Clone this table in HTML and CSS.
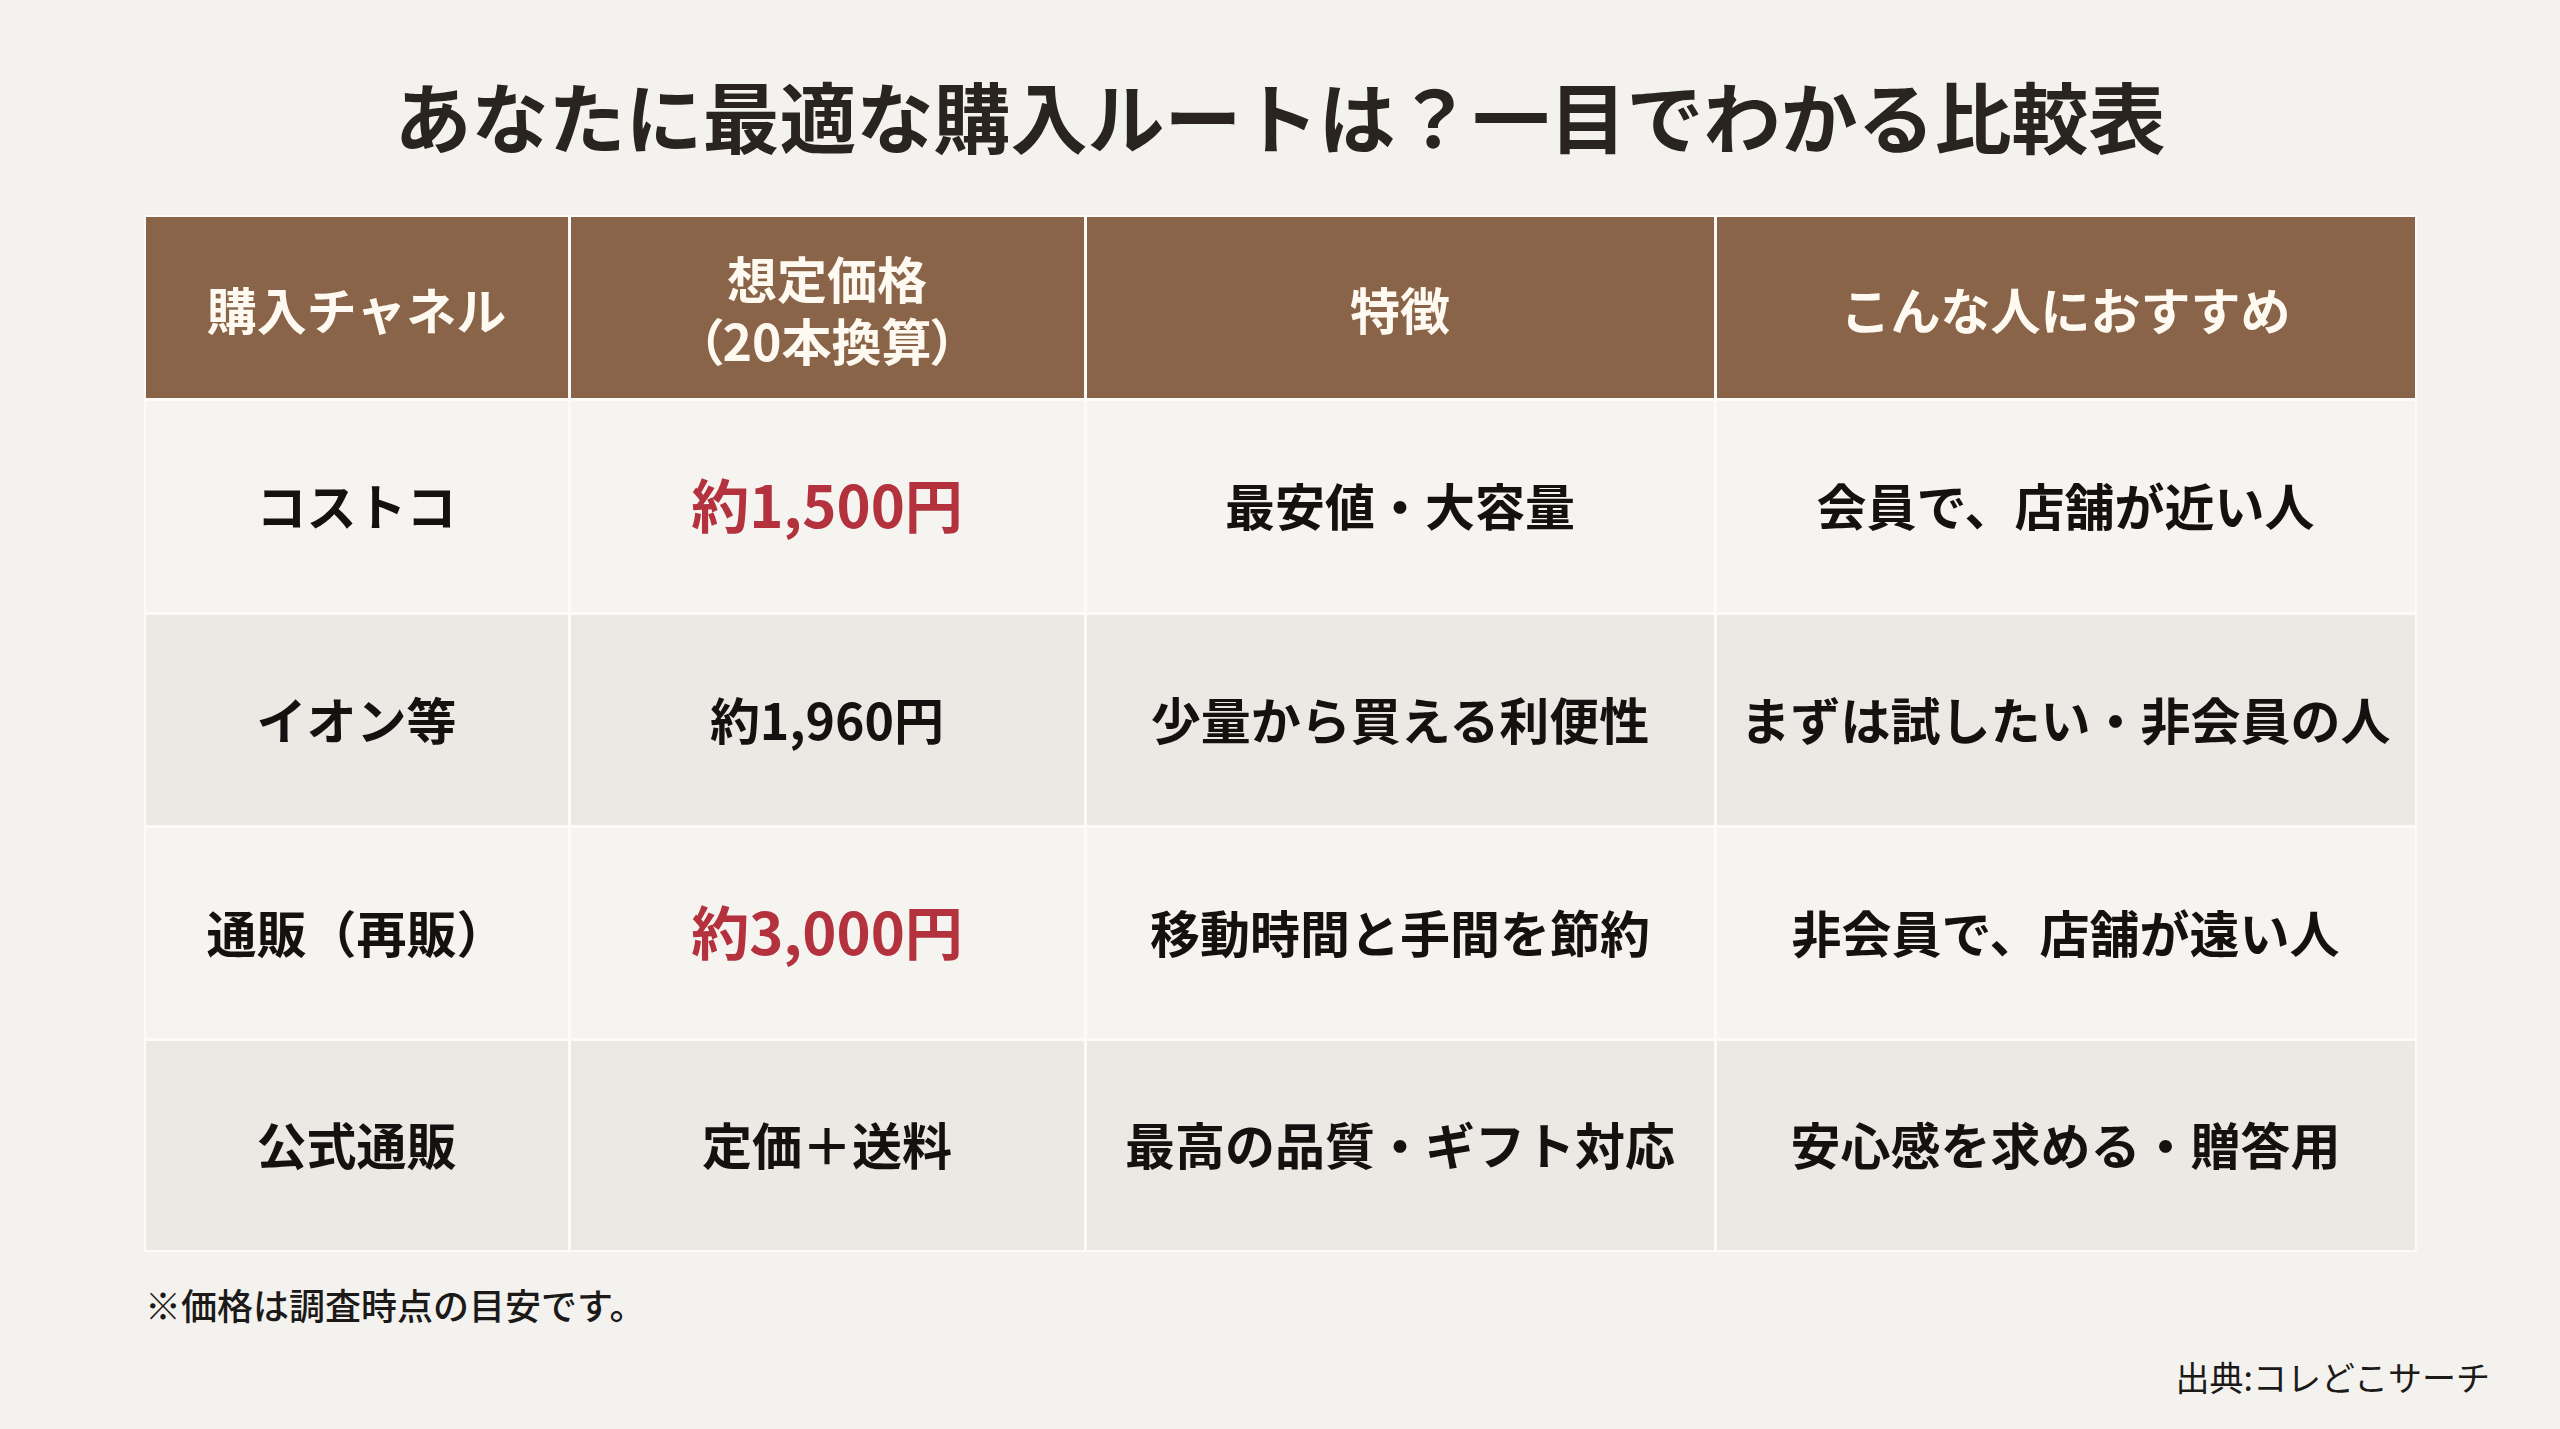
FILE: index.html
```html
<!DOCTYPE html>
<html lang="ja">
<head>
<meta charset="utf-8">
<title>比較表</title>
<link rel="stylesheet" href="styles.css">
</head>
<body>
<main class="page">
  <h1 class="title">あなたに最適な購入ルートは？一目でわかる比較表</h1>
  <div class="table">
    <div class="cell head">購入チャネル</div>
    <div class="cell head"><span class="head-lines"><span class="line">想定価格</span><span class="line palt">（20本換算）</span></span></div>
    <div class="cell head">特徴</div>
    <div class="cell head">こんな人におすすめ</div>

    <div class="cell odd">コストコ</div>
    <div class="cell odd price">約1,500円</div>
    <div class="cell odd">最安値・大容量</div>
    <div class="cell odd">会員で、店舗が近い人</div>

    <div class="cell even">イオン等</div>
    <div class="cell even">約1,960円</div>
    <div class="cell even">少量から買える利便性</div>
    <div class="cell even">まずは試したい・非会員の人</div>

    <div class="cell odd">通販（再販）</div>
    <div class="cell odd price">約3,000円</div>
    <div class="cell odd">移動時間と手間を節約</div>
    <div class="cell odd">非会員で、店舗が遠い人</div>

    <div class="cell even">公式通販</div>
    <div class="cell even">定価＋送料</div>
    <div class="cell even">最高の品質・ギフト対応</div>
    <div class="cell even">安心感を求める・贈答用</div>
  </div>
  <p class="note">※価格は調査時点の目安です。</p>
  <p class="source">出典:コレどこサーチ</p>
</main>
</body>
</html>
```

FILE: styles.css
```css
html, body {
  margin: 0;
  padding: 0;
  background: #f3f2ee;
}

body {
  font-family: "Noto Sans CJK JP", "Noto Sans", sans-serif;
  color: #141210;
}

.page {
  width: 2560px;
  height: 1429px;
  box-sizing: border-box;
  padding-top: 76px;
  display: flex;
  flex-direction: column;
  align-items: center;
}

.title {
  margin: 0;
  font-size: 77px;
  line-height: 77px;
  font-weight: 700;
  color: #2a2421;
  text-align: center;
}

.table {
  margin-top: 62px;
  display: grid;
  grid-template-columns: 422px 513px 627px 698px;
  grid-template-rows: 181px 211px 210px 210px 209px;
  gap: 3px;
  padding: 2px;
  background: #fcfbf8;
}

.cell {
  display: flex;
  align-items: center;
  justify-content: center;
  text-align: center;
  font-size: 50px;
  font-weight: 700;
  line-height: 1.2;
  padding-bottom: 5px;
  box-sizing: border-box;
}

.head {
  background: #8a6448;
  color: #fffaf1;
  padding-bottom: 0;
}

.head-lines {
  display: flex;
  flex-direction: column;
  align-items: center;
  gap: 2px;
}

.line {
  display: block;
  line-height: 60px;
}

.palt {
  font-feature-settings: "palt";
}

.odd {
  background: #f5f4f0;
}

.even {
  background: #ece8e3;
}

.price {
  color: #b3323d;
  font-size: 58px;
}

.note {
  align-self: flex-start;
  margin: 34px 0 0 145px;
  font-size: 36px;
  line-height: 36px;
  font-weight: 500;
  color: #1c1a18;
}

.source {
  align-self: flex-end;
  margin: 38px 70px 0 0;
  font-size: 34px;
  line-height: 34px;
  font-weight: 400;
  color: #1c1a18;
}
```
